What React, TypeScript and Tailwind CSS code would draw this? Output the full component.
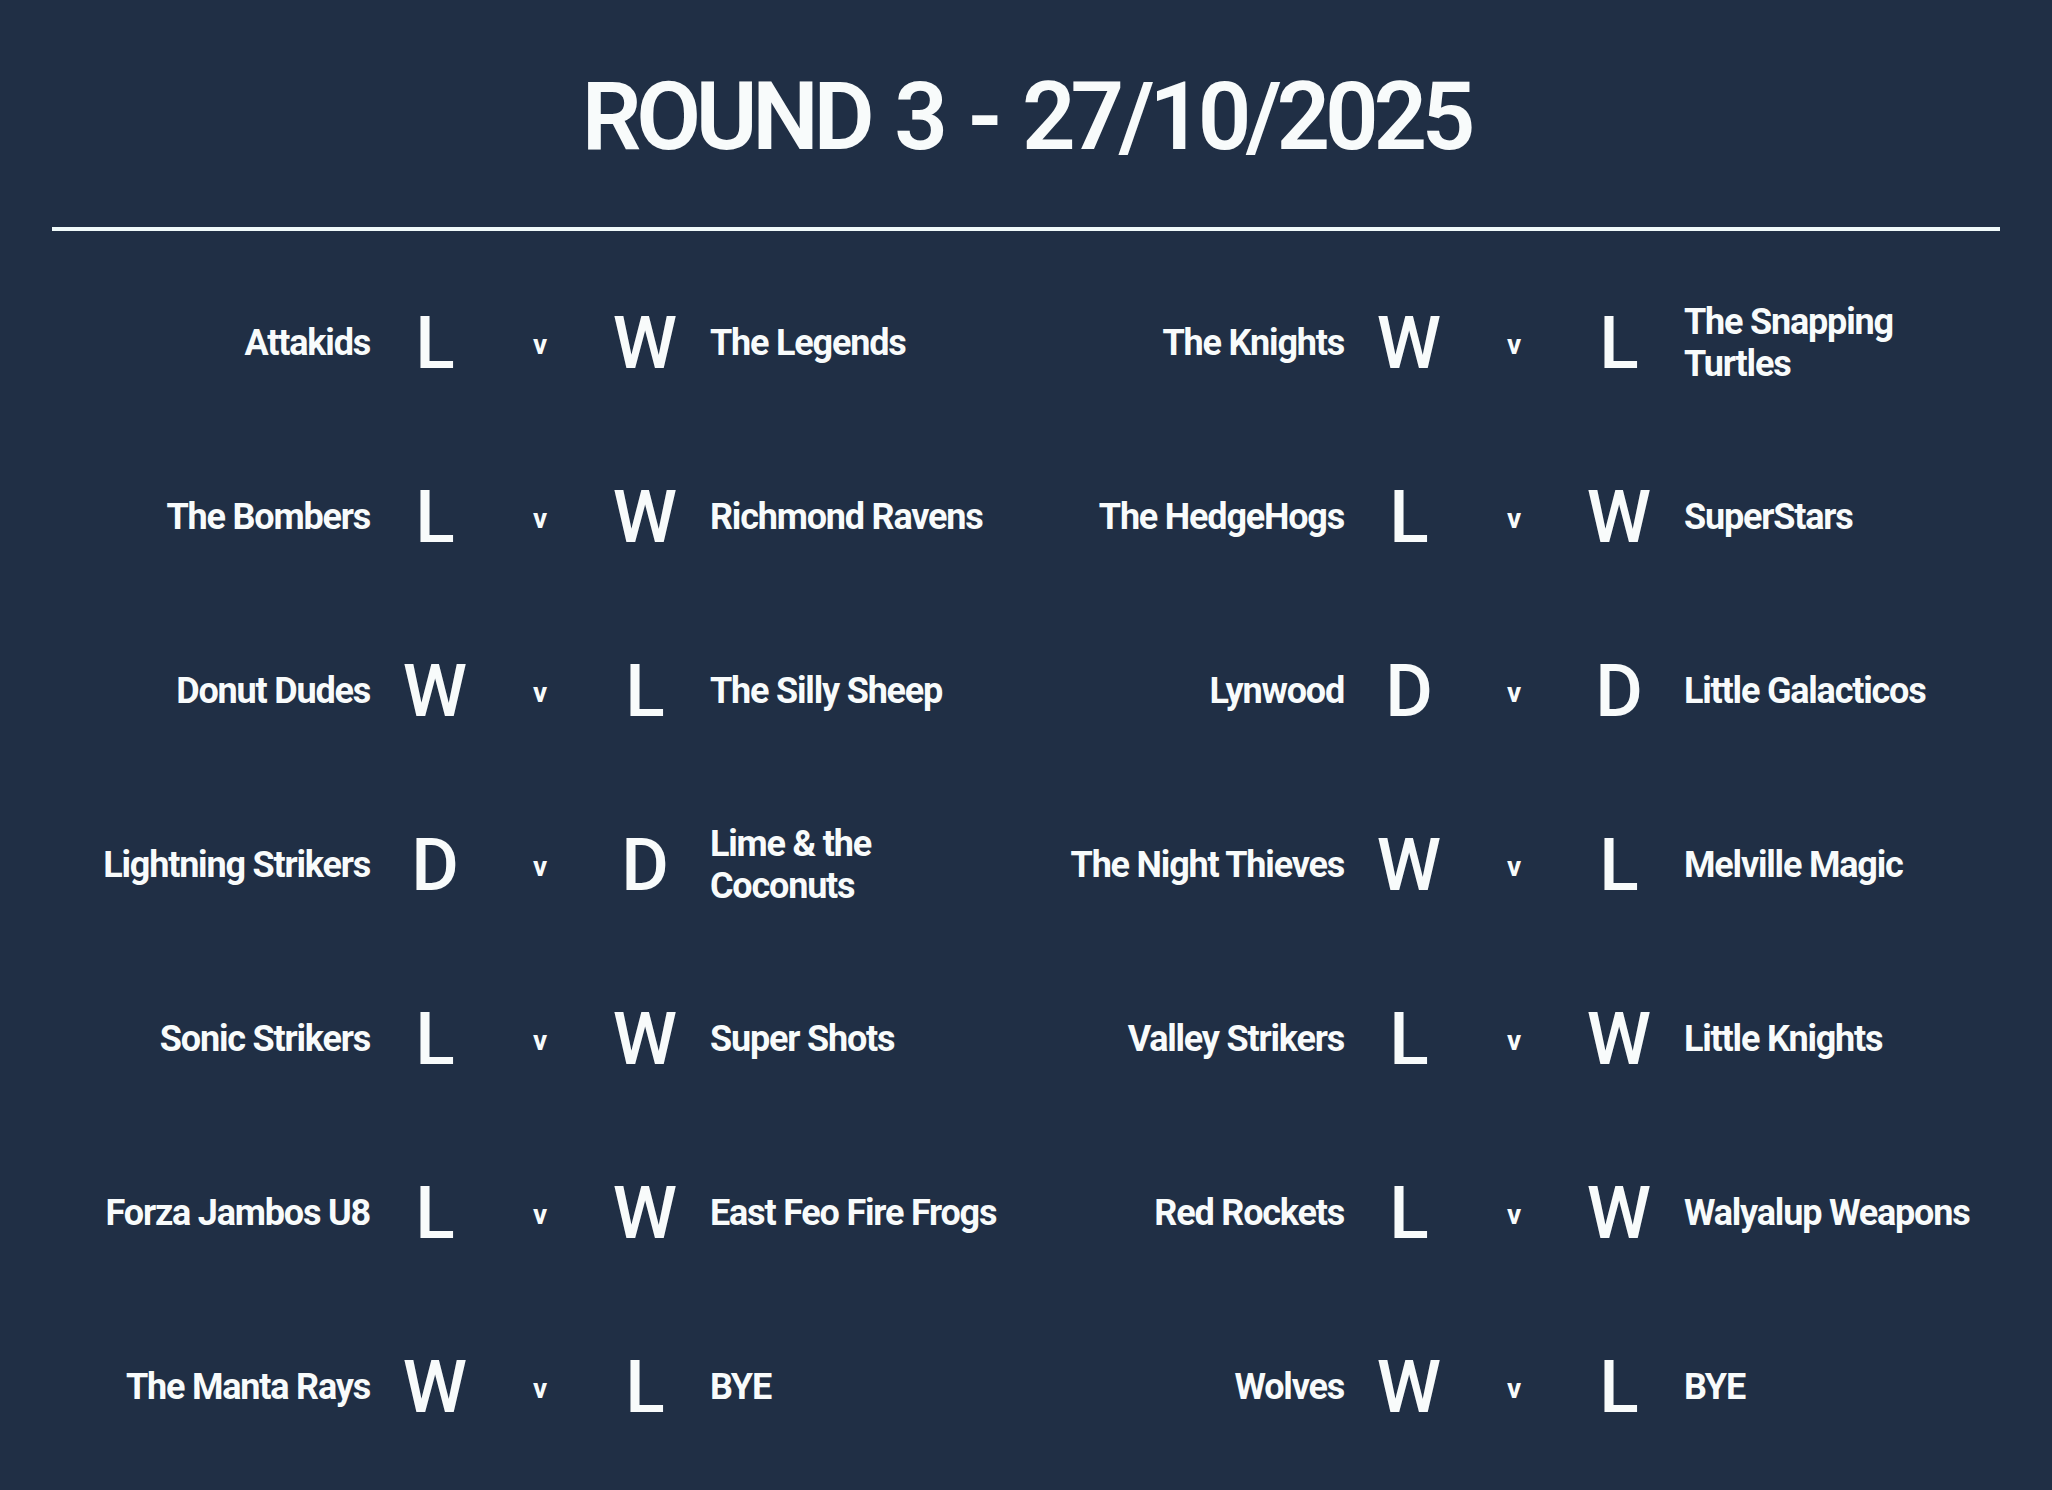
type Fixture = {
  home: string;
  homeResult: string;
  away: string;
  awayResult: string;
};

const left: Fixture[] = [
  { home: "Attakids", homeResult: "L", away: "The Legends", awayResult: "W" },
  { home: "The Bombers", homeResult: "L", away: "Richmond Ravens", awayResult: "W" },
  { home: "Donut Dudes", homeResult: "W", away: "The Silly Sheep", awayResult: "L" },
  { home: "Lightning Strikers", homeResult: "D", away: "Lime & the Coconuts", awayResult: "D" },
  { home: "Sonic Strikers", homeResult: "L", away: "Super Shots", awayResult: "W" },
  { home: "Forza Jambos U8", homeResult: "L", away: "East Feo Fire Frogs", awayResult: "W" },
  { home: "The Manta Rays", homeResult: "W", away: "BYE", awayResult: "L" },
];

const right: Fixture[] = [
  { home: "The Knights", homeResult: "W", away: "The Snapping Turtles", awayResult: "L" },
  { home: "The HedgeHogs", homeResult: "L", away: "SuperStars", awayResult: "W" },
  { home: "Lynwood", homeResult: "D", away: "Little Galacticos", awayResult: "D" },
  { home: "The Night Thieves", homeResult: "W", away: "Melville Magic", awayResult: "L" },
  { home: "Valley Strikers", homeResult: "L", away: "Little Knights", awayResult: "W" },
  { home: "Red Rockets", homeResult: "L", away: "Walyalup Weapons", awayResult: "W" },
  { home: "Wolves", homeResult: "W", away: "BYE", awayResult: "L" },
];

function FixtureRow({ f }: { f: Fixture }) {
  return (
    <div className="grid h-[174px] grid-cols-[318px_130px_80px_130px_1fr] items-center">
      <div className="text-right text-[36px] font-bold leading-[42px] tracking-[-1.2px]">{f.home}</div>
      <div className="text-center text-[73px] font-medium leading-none">{f.homeResult}</div>
      <div className="mt-[4px] text-center text-[28px] font-bold leading-none">v</div>
      <div className="text-center text-[73px] font-medium leading-none">{f.awayResult}</div>
      <div className="w-[300px] text-left text-[36px] font-bold leading-[42px] tracking-[-1.2px]">{f.away}</div>
    </div>
  );
}

export default function App() {
  const rows = left.map((f, i) => [f, right[i]] as const);

  return (
    <div className="min-h-screen bg-[#202f45] px-[52px] pt-[70px] font-['Roboto',sans-serif] text-[#f8fbfb]">
      <h1 className="text-center text-[94px] font-semibold leading-none tracking-[-5.3px] [word-spacing:7px]">
        ROUND 3 - 27/10/2025
      </h1>

      <div className="mt-[63px] h-[4px] bg-[#f0fafa]" />

      <div className="pt-[25px]">
        {rows.map(([l, r], i) => (
          <div key={i} className="grid grid-cols-2">
            <FixtureRow f={l} />
            <FixtureRow f={r} />
          </div>
        ))}
      </div>
    </div>
  );
}
